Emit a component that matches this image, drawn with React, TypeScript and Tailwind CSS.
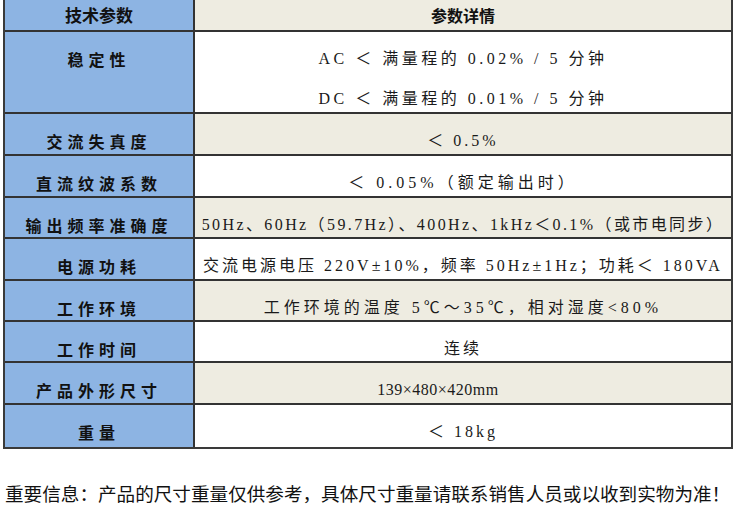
const rows: { name: string; lines: string[]; beige: boolean; h: string; track: string; extra?: string }[] = [
  { name: "稳定性", lines: ["AC ＜ 满量程的 0.02% / 5 分钟", "DC ＜ 满量程的 0.01% / 5 分钟"], beige: false, h: "h-[82px]", track: "tracking-[3.5px]" },
  { name: "交流失真度", lines: ["＜ 0.5%"], beige: true, h: "h-[42px]", track: "tracking-[3px]" },
  { name: "直流纹波系数", lines: ["＜ 0.05%（额定输出时）"], beige: false, h: "h-[42px]", track: "tracking-[4px]" },
  { name: "输出频率准确度", lines: ["50Hz、60Hz（59.7Hz）、400Hz、1kHz＜0.1%（或市电同步）"], beige: true, h: "h-[41px]", track: "tracking-[2.4px]" },
  { name: "电源功耗", lines: ["交流电源电压 220V±10%，频率 50Hz±1Hz；功耗＜ 180VA"], beige: false, h: "h-[42px]", track: "tracking-[3px]" },
  { name: "工作环境", lines: ["工作环境的温度 5℃～35℃，相对湿度<80%"], beige: true, h: "h-[41px]", track: "tracking-[4px]" },
  { name: "工作时间", lines: ["连续"], beige: false, h: "h-[41px]", track: "tracking-[3px]" },
  { name: "产品外形尺寸", lines: ["139×480×420mm"], beige: true, h: "h-[42px]", track: "tracking-[0.5px]", extra: "pr-[50px]" },
  { name: "重量", lines: ["＜ 18kg"], beige: false, h: "h-[42px]", track: "tracking-[3px]" },
];

const sans = "font-['Noto_Sans_CJK_SC',sans-serif]";
const serif = "font-['Liberation_Serif','Noto_Sans_CJK_SC',serif]";

function App() {
  return (
    <div className="w-[750px] h-[505px] bg-white overflow-hidden">
      <div className="ml-[3px] w-[730px] border-x-2 border-b-2 border-[#3a3a3a]">
        {/* header */}
        <div className="grid grid-cols-[190px_1fr] h-[32px] border-b-2 border-[#333]">
          <div className={`bg-[#8db4e3] border-r-2 border-[#333] flex items-center justify-center text-[17px] font-bold text-[#111] ${sans}`}>
            技术参数
          </div>
          <div className={`bg-[#eeece1] flex items-center justify-center text-[16px] font-bold text-[#111] ${sans}`}>
            参数详情
          </div>
        </div>

        {rows.map((r, i) => (
          <div
            key={r.name}
            className={`grid grid-cols-[190px_1fr] ${r.h} ${i < rows.length - 1 ? "border-b-2 border-[#333]" : ""}`}
          >
            <div className={`bg-[#8db4e3] border-r-2 border-[#333] flex justify-center pt-[16px] text-[16px] leading-[22px] font-bold tracking-[5px] text-[#111] ${sans}`}>
              {r.name}
            </div>
            <div
              className={`${r.beige ? "bg-[#eeece1]" : "bg-white"} flex flex-col items-center pt-[16px] gap-[18px] text-[16px] leading-[22px] ${r.track} ${r.extra ?? ""} text-[#1a1a1a] whitespace-nowrap overflow-hidden ${serif}`}
            >
              {r.lines.map((l) => (
                <div key={l}>{l}</div>
              ))}
            </div>
          </div>
        ))}
      </div>

      <div className={`mt-[34px] pl-[5px] text-[18.6px] leading-[24px] text-[#111] whitespace-nowrap ${serif}`}>
        重要信息：产品的尺寸重量仅供参考，具体尺寸重量请联系销售人员或以收到实物为准！
      </div>
    </div>
  );
}

export default App;
